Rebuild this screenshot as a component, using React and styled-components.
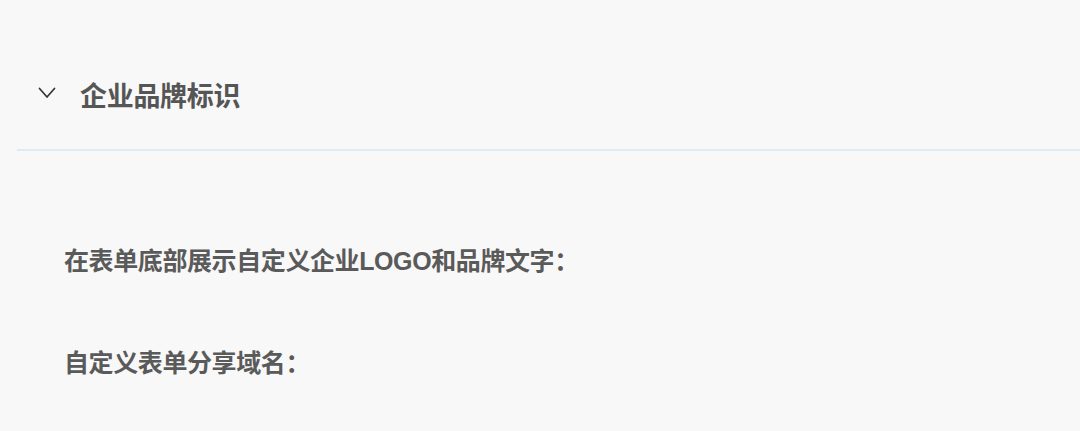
import React, { useState } from "react";
import styled, { createGlobalStyle } from "styled-components";

const GlobalStyle = createGlobalStyle`
  html, body {
    margin: 0;
    padding: 0;
    background: #f8f8f8;
  }
  body {
    font-family: "Liberation Sans", "Noto Sans CJK SC", sans-serif;
  }
`;

const fields = ["在表单底部展示自定义企业LOGO和品牌文字：", "自定义表单分享域名："];

const App = () => {
  const [isOpen, setIsOpen] = useState(true);

  return (
    <Page>
      <GlobalStyle />
      <Section>
        <Header onClick={() => setIsOpen(!isOpen)}>
          <Chevron $open={isOpen} width="18" height="12" viewBox="0 0 18 12">
            <path
              d="M1.5 1.5 L9 10 L16.5 1.5"
              fill="none"
              stroke="#333"
              strokeWidth="1.7"
              strokeLinecap="round"
              strokeLinejoin="round"
            />
          </Chevron>
          <Title>企业品牌标识</Title>
        </Header>
        {isOpen && (
          <Body>
            {fields.map((label) => (
              <FieldRow key={label}>
                <Label>{label}</Label>
              </FieldRow>
            ))}
          </Body>
        )}
      </Section>
    </Page>
  );
};

export default App;

const Page = styled.div`
  width: 1080px;
  height: 431px;
  overflow: hidden;
  background: #f8f8f8;
`;

const Section = styled.div`
  padding-left: 17px;
`;

const Header = styled.div`
  display: flex;
  align-items: center;
  height: 151px;
  padding-left: 21px;
  padding-top: 40px;
  box-sizing: border-box;
  border-bottom: 2px solid #e0eaf5;
  cursor: pointer;
`;

const Chevron = styled.svg`
  flex-shrink: 0;
  margin-top: -4px;
  transform: rotate(${(p) => (p.$open ? "0deg" : "-90deg")});
`;

const Title = styled.span`
  margin-left: 24px;
  font-size: 27px;
  font-weight: 700;
  color: #555;
  letter-spacing: -0.3px;
`;

const Body = styled.div`
  padding-left: 47px;
  padding-top: 90px;
  display: flex;
  flex-direction: column;
  gap: 66px;
`;

const FieldRow = styled.div`
  display: flex;
  align-items: center;
  height: 36px;
`;

const Label = styled.span`
  font-size: 25px;
  font-weight: 700;
  color: #5a5a5a;
  letter-spacing: -0.4px;
`;
